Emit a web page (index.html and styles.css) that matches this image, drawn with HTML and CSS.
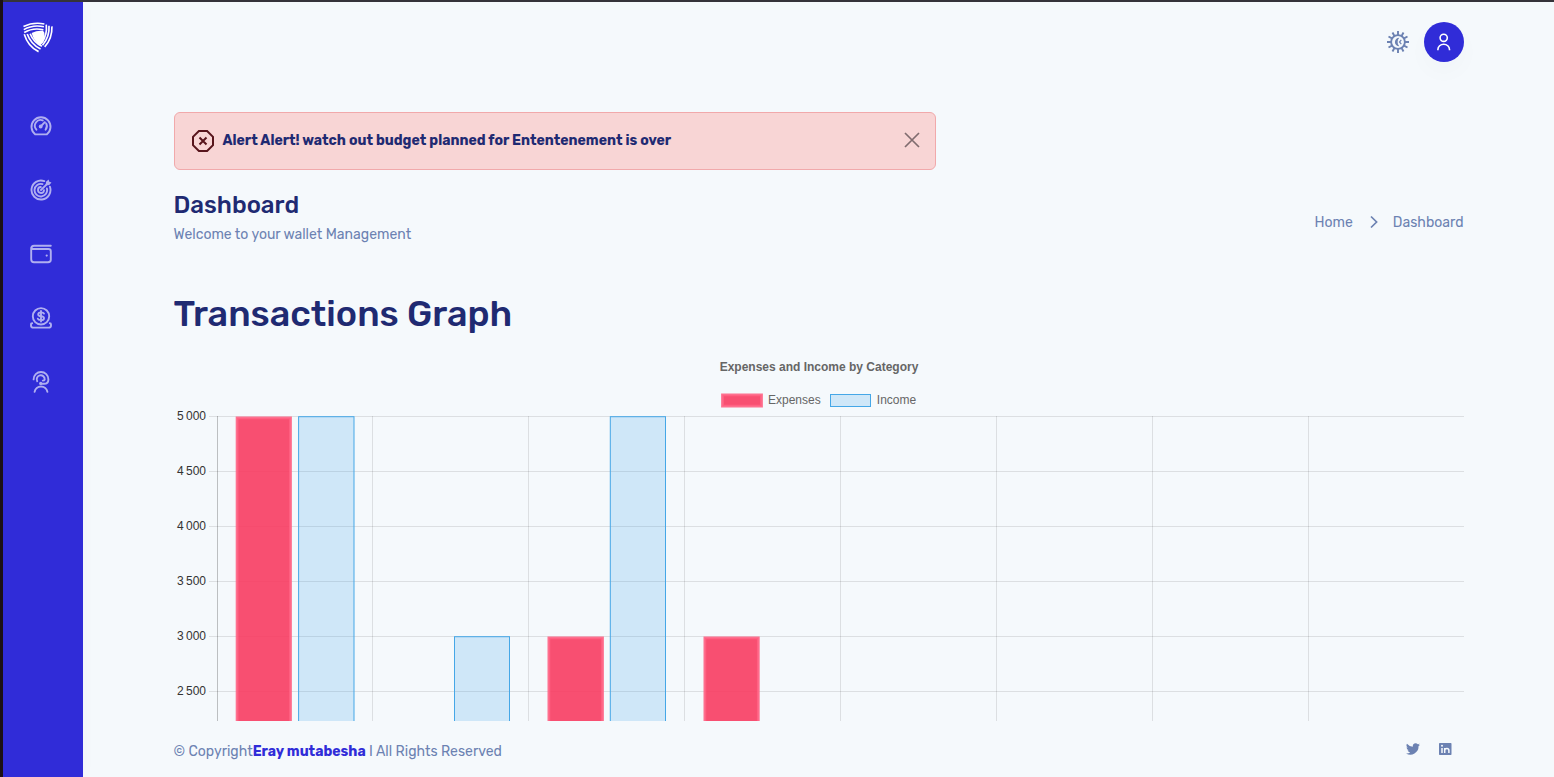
FILE: index.html
```html
<!DOCTYPE html>
<html lang="en">
<head>
<meta charset="utf-8">
<title>Dashboard</title>
<link rel="stylesheet" href="styles.css">
</head>
<body>
<div class="app">
  <aside class="sidebar">
    <svg class="logo" width="32" height="32" viewBox="-.3 -1 32.6 32.6" fill="none" stroke="#fff" stroke-width="1.7">
      <path d="M9.5 11.2Q16 8.2 21.3 9.2L22.5 11Q23 18 20.8 21.3L18 24Q11.5 19 9.5 11.2Z" fill="#fff" stroke="none"/>
      <path d="M1.2 4.7Q11 -.2 22.5 2M1.5 7.8Q11 2.4 22 4.9M2 10.8Q11 5.4 21.5 8"/>
      <path d="M30.2 4.5Q30.6 17 22.8 25.4M27.2 3.8Q28 15 20.6 23.7M24.4 2.6Q25.6 13 20 21"/>
      <path d="M2 12.6Q6 25.5 16.6 30.2M5 12.2Q8.8 22.7 18.6 27.5M8 12Q11.5 20.7 20 24.8"/>
    </svg>
    <nav class="menu">
      <a class="menu-item"><svg class="icon" viewBox="0 0 22 22"><path d="M5.3 19.4A9.5 9.5 0 1 1 16.7 19.4Z"/><path d="M6.4 14.7A5.8 5.8 0 0 1 12.8 5.4M16.2 8.4A5.8 5.8 0 0 1 15.6 14.7M10.2 12L14.8 7.2"/><circle class="solid" cx="10.7" cy="11.5" r="1.9"/></svg></a>
      <a class="menu-item"><svg class="icon" viewBox="0 0 22 22"><path d="M14.3 2.1A9.5 9.5 0 1 0 19.9 7.7M12.5 5.1A6.3 6.3 0 1 0 16.9 9.5M10.8 8A3 3 0 1 0 14 11.2M11 11L17.2 4.8"/><path class="solid" d="M15.6 6.5L16 2.8L18.6 .6L19.3 2.7L21.5 3.4L19.3 6Z"/></svg></a>
      <a class="menu-item"><svg class="icon" viewBox="0 0 22 22"><path d="M20.8 2.8H4Q1.2 2.8 1.2 5.4V16.2Q1.2 19.2 4 19.2H18Q20.8 19.2 20.8 16.8V8.3Q20.8 6 18.4 6H3.5Q1.2 6 1.2 4.6"/><circle class="solid" cx="16.7" cy="12.6" r="1.1"/></svg></a>
      <a class="menu-item"><svg class="icon" viewBox="0 0 22 22"><circle cx="11" cy="9.3" r="8.2"/><path d="M14 6.6Q13.5 5.4 11 5.4Q8.2 5.4 8.2 7.4Q8.2 8.9 11 9.2Q14 9.5 14 11.2Q14 13.1 11 13.1Q8.3 13.1 7.8 11.7M11 4V14.6M2.2 16.2Q1 16.2 1 17.4V18.4Q1 20.6 3.4 20.6H18.6Q21 20.6 21 18.4V17.4Q21 16.2 19.8 16.2"/></svg></a>
      <a class="menu-item"><svg class="icon" viewBox="0 0 22 22"><path d="M3.6 8.4A7.4 7.4 0 0 1 18.4 8.4Q18.4 12.7 14 12.7H11M7.2 10.2A4 4 0 1 1 14.7 8.6Q14.3 9.6 12.8 9.6M4.6 20.8A6.5 6.5 0 0 1 17.4 20.8"/><circle class="solid" cx="10.7" cy="12.4" r="1.6"/></svg></a>
    </nav>
  </aside>
  <main class="page">
    <header class="topbar">
      <svg class="theme" width="24" height="24" viewBox="0 0 24 24" fill="none" stroke="#6c82b2" stroke-width="1.9">
        <circle cx="12" cy="12" r="6.9"/>
        <path d="M12 1V5M12 19V23M1 12H5M19 12H23M6.5 2.5L8.4 6M17.5 2.5L15.6 6M2.5 6.5L6 8.4M21.5 6.5L18 8.4M2.5 17.5L6 15.6M21.5 17.5L18 15.6M6.5 21.5L8.4 18M17.5 21.5L15.6 18"/>
        <path d="M13.2 7.7A4.3 4.3 0 1 0 13.2 16.3Q11.6 14.5 11.6 12Q11.6 9.5 13.2 7.7Z" fill="#6c82b2" stroke="none"/>
        <path d="M15.3 9.8L13.5 12L15.3 14.2" stroke-width="1.2"/>
      </svg>
      <div class="avatar"><svg width="16" height="20" viewBox="0 0 16 20" fill="none" stroke="#fff" stroke-width="1.6"><circle cx="7.7" cy="5.8" r="3.6"/><path d="M1.9 18.3V17.5A5.8 5.3 0 0 1 13.5 17.5V18.3"/></svg></div>
    </header>
    <section class="alert">
      <svg width="24" height="24" viewBox="0 0 24 24" fill="none" stroke="#58151c" stroke-width="2"><path d="M7.9 2H16.1L22 7.9V16.1L16.1 22H7.9L2 16.1V7.9ZM8.5 8.5L15.5 15.5M15.5 8.5L8.5 15.5"/></svg>
      <strong class="alert-text">Alert Alert! watch out budget planned for Ententenement is over</strong>
      <svg class="close" width="16" height="16" viewBox="0 0 16 16" fill="none" stroke="#806c6f" stroke-width="1.7"><path d="M1 1L15 15M15 1L1 15"/></svg>
    </section>
    <section class="heading">
      <div class="heading-text">
        <h3 class="title">Dashboard</h3>
        <p class="subtitle">Welcome to your wallet Management</p>
      </div>
      <nav class="crumbs">
        <span class="crumb-home">Home</span>
        <svg width="8" height="14" viewBox="0 0 8 14" fill="none" stroke="#6c82b2" stroke-width="1.7"><path d="M1 1.5L6.6 7L1 12.5"/></svg>
        <span class="crumb-current">Dashboard</span>
      </nav>
    </section>
    <h1 class="graph-title">Transactions Graph</h1>
    <svg class="chart" width="1290" height="371" viewBox="174 350 1290 371">
      <text class="chart-title" x="819" y="371">Expenses and Income by Category</text>
      <rect class="expense" x="722.5" y="394.9" width="39" height="11.2"/>
      <text class="legend" x="768" y="404">Expenses</text>
      <rect class="income" x="830.5" y="394.5" width="40" height="12"/>
      <text class="legend" x="876.8" y="404">Income</text>
      <path class="grid" d="M209 416.5H1464M209 471.5H1464M209 526.5H1464M209 581.5H1464M209 636.5H1464M209 691.5H1464M372.5 416V721M528.5 416V721M684.5 416V721M840.5 416V721M996.5 416V721M1152.5 416V721M1308.5 416V721"/>
      <path class="axis" d="M217.5 416V721"/>
      <g class="ticks">
        <text x="206" y="420">5&#8239;000</text>
        <text x="206" y="475">4&#8239;500</text>
        <text x="206" y="530">4&#8239;000</text>
        <text x="206" y="585">3&#8239;500</text>
        <text x="206" y="640">3&#8239;000</text>
        <text x="206" y="695">2&#8239;500</text>
      </g>
      <rect class="expense" x="237.1" y="417.9" width="53.4" height="400"/>
      <rect class="income" x="298.6" y="416.7" width="55.4" height="400"/>
      <rect class="income" x="454.5" y="636.7" width="55" height="200"/>
      <rect class="expense" x="548.9" y="637.9" width="53.6" height="200"/>
      <rect class="income" x="610.3" y="416.7" width="55.2" height="400"/>
      <rect class="expense" x="704.9" y="637.9" width="53.4" height="200"/>
    </svg>
    <footer class="footer">
      <p class="copy"><span class="copy-a">© Copyright</span><b class="author">Eray mutabesha</b><span class="copy-b"> I All Rights Reserved</span></p>
      <div class="social">
        <svg width="14" height="12" viewBox="0 1.8 24 20" fill="#6c82b2"><path d="M24 4.3a10 10 0 0 1-2.8.8 5 5 0 0 0 2.1-2.7 10 10 0 0 1-3.1 1.2 4.9 4.9 0 0 0-8.4 4.5A14 14 0 0 1 1.7 2.9a4.9 4.9 0 0 0 1.5 6.6 5 5 0 0 1-2.2-.6 4.9 4.9 0 0 0 3.9 4.9 5 5 0 0 1-2.2.1 4.9 4.9 0 0 0 4.6 3.4A9.9 9.9 0 0 1 0 19.3 14 14 0 0 0 21.5 6.8 10 10 0 0 0 24 4.3Z"/></svg>
        <svg width="13" height="12" viewBox="0 0 13 12"><rect width="12.5" height="12" rx=".7" fill="#6c82b2"/><path d="M3 5V10M5.7 10V5M5.7 7.6Q5.7 5.5 7.9 5.5Q9.9 5.5 9.9 7.6V10" fill="none" stroke="#f5f9fc" stroke-width="1.5"/><circle cx="3" cy="2.8" r="1" fill="#f5f9fc"/></svg>
      </div>
    </footer>
  </main>
</div>
</body>
</html>
```
FILE: styles.css
```css
* { box-sizing: border-box; }
body {
  margin: 0;
  background: #f5f9fc;
  color: #6c82b2;
  font: 14px/22px Rubik, Roboto, sans-serif;
}
h1, h3, p { margin: 0; }
svg { display: block; flex: none; }
.app {
  display: flex;
  height: 777px;
  border-left: 3px solid #1b1013;
  overflow: hidden;
}
.sidebar {
  width: 80px;
  flex: none;
  padding-top: 20px;
  border-top: 2px solid #35333a;
  background: #302cd8;
  box-shadow: 0 0 16px rgba(48, 44, 216, .025);
}
.logo { margin-left: 19px; margin-top: -1px; }
.menu {
  display: flex;
  flex-direction: column;
  align-items: center;
  gap: 42px;
  padding-top: 62px;
  padding-right: 4px;
}
.icon {
  width: 22px;
  height: 22px;
  fill: none;
  stroke: #b0aff0;
  stroke-width: 1.9;
  stroke-linecap: round;
  stroke-linejoin: round;
}
.solid { fill: #b0aff0; stroke: none; }
.page {
  flex: 1;
  min-width: 0;
  padding: 0 90px 0 91px;
  border-top: 2px solid #35333a;
}
.topbar {
  display: flex;
  justify-content: flex-end;
  align-items: center;
  gap: 14.5px;
  padding-top: 20px;
}
.avatar {
  display: flex;
  align-items: center;
  justify-content: center;
  width: 40px;
  height: 40px;
  border-radius: 50%;
  background: #302cd8;
  box-shadow: 0 10px 24px rgba(60, 60, 90, .025);
}
.alert {
  display: flex;
  align-items: center;
  width: 762px;
  height: 58px;
  margin-top: 50px;
  padding: 0 16px;
  border: 1px solid #f1a9ab;
  border-radius: 6px;
  background: #f8d5d5;
}
.alert-text {
  margin-left: 7.5px;
  color: #1f2a72;
  white-space: nowrap;
}
.close { margin: -2px -1px 0 auto; }
.heading {
  display: flex;
  justify-content: space-between;
  height: 76px;
  padding-top: 20px;
}
.heading-text, .graph-title, .copy { margin-left: -.5px; }
.title {
  color: #1f2a72;
  font-size: 24px;
  font-weight: 500;
  line-height: 30px;
}
.subtitle { padding-top: 4px; white-space: nowrap; }
.crumbs {
  display: flex;
  align-items: center;
  height: 22px;
  margin: 22px .5px 0 0;
}
.crumbs svg { margin: -2px 15px 0 17px; }
.graph-title {
  margin-top: 46px;
  color: #1f2a72;
  font-size: 36px;
  font-weight: 500;
  line-height: 44px;
}
.chart {
  margin-top: 14px;
  overflow: hidden;
  font-family: "Liberation Sans", Arial, sans-serif;
  font-size: 12px;
}
.chart-title { fill: #666; font-weight: bold; text-anchor: middle; }
.legend { fill: #666; }
.ticks { fill: #333; text-anchor: end; }
.grid { fill: none; stroke: rgba(0, 0, 0, .1); }
.axis { stroke: rgba(0, 0, 0, .23); }
.expense { fill: rgba(248, 60, 98, .9); stroke: rgba(255, 99, 132, .9); stroke-width: 2.8; }
.income { fill: rgba(54, 162, 235, .2); stroke: #45a7e7; stroke-width: 1; }
.footer {
  display: flex;
  justify-content: space-between;
  padding-top: 20px;
}
.copy { white-space: pre; }
.author { color: #302cd8; }
.social {
  display: flex;
  gap: 19px;
  padding: 2px 12px 0 0;
}
```
